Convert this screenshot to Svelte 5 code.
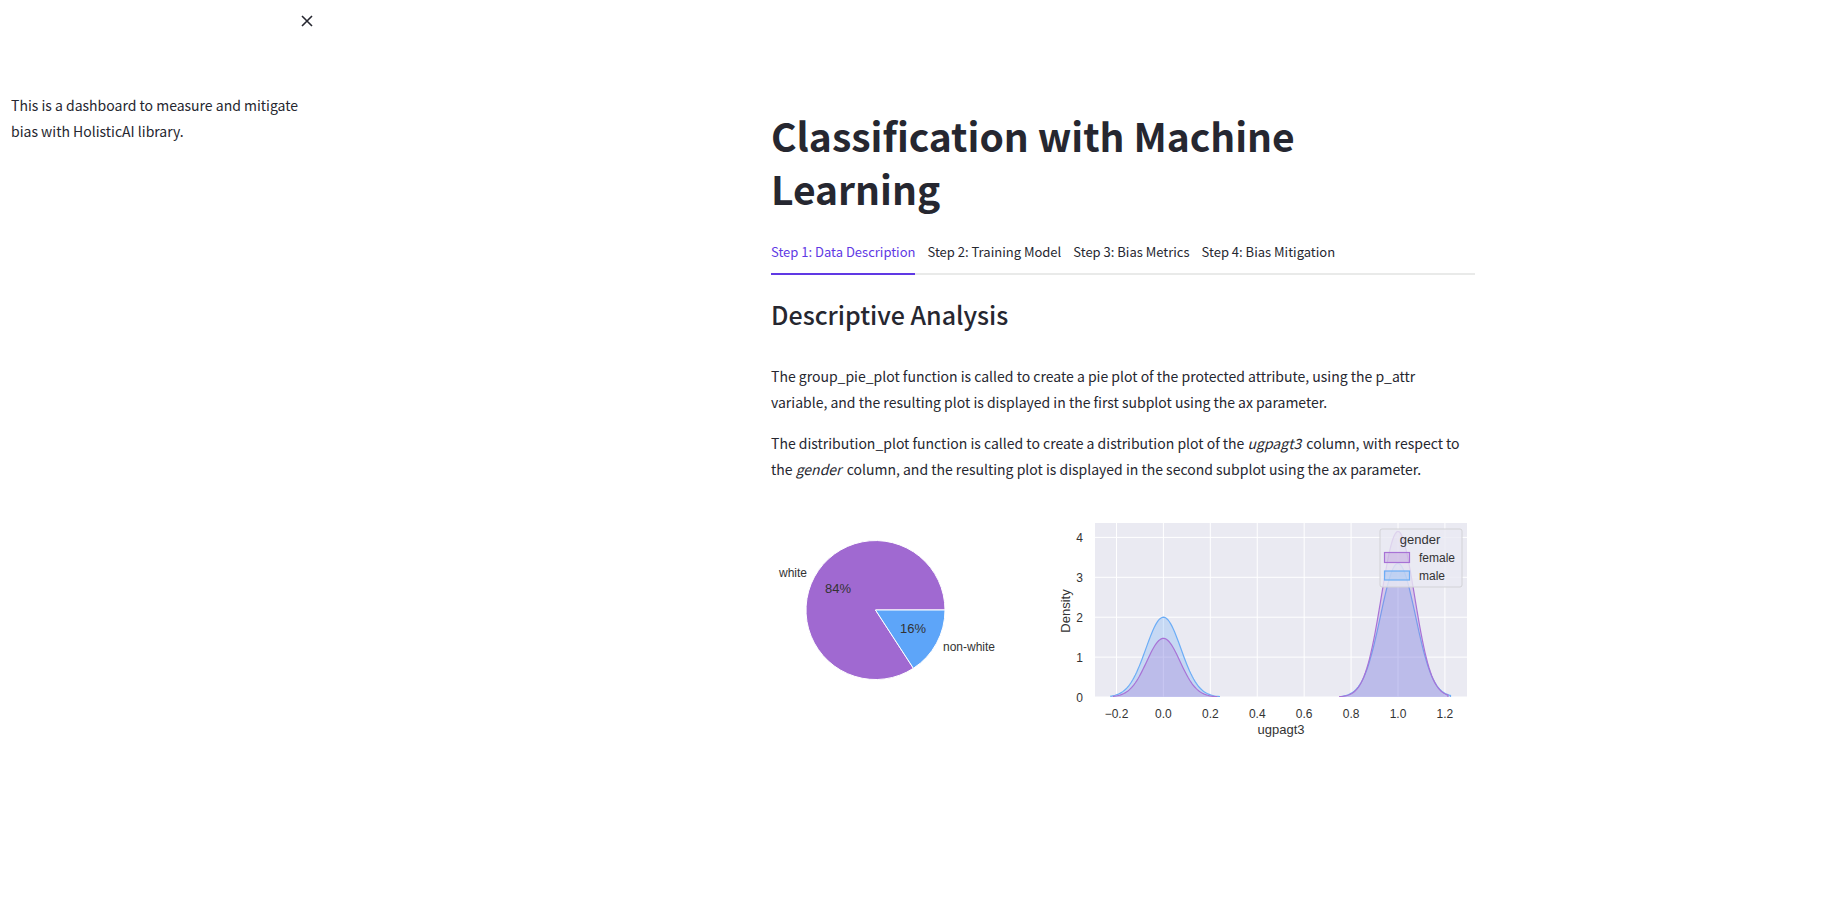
<script>
  const tabs = [
    'Step 1: Data Description',
    'Step 2: Training Model',
    'Step 3: Bias Metrics',
    'Step 4: Bias Mitigation'
  ];
  let active = $state(0);
  let open = $state(true);

  // Density plot scales
  const plot = { left: 324, right: 696, top: 25, bottom: 199 };
  const sx = (v) => 392.4 + v * 234.6;
  const sy = (v) => plot.bottom - v * 39.9;

  const xTicks = [-0.2, 0, 0.2, 0.4, 0.6, 0.8, 1, 1.2];
  const yTicks = [0, 1, 2, 3, 4];
  const label = (v) => v.toFixed(1).replace('-', '\u2212');

  // Gaussian bump sampled between two distances from its mean
  function bump(mean, peak, sd, from, to) {
    let d = `M${sx(mean + from * sd).toFixed(2)} ${plot.bottom}`;
    for (let i = 0; i <= 80; i++) {
      const z = from + ((to - from) * i) / 80;
      d += `L${sx(mean + z * sd).toFixed(2)} ${sy(peak * Math.exp((-z * z) / 2)).toFixed(2)}`;
    }
    return `${d}V${plot.bottom}`;
  }

  const curves = [
    { kind: 'male', d: bump(0, 2, 0.0746, -3, 3.2) },
    { kind: 'male', d: bump(1, 3.35, 0.0746, -3.2, 3) },
    { kind: 'female', d: bump(0, 1.47, 0.071, -3, 3.2) },
    { kind: 'female', d: bump(1, 4.15, 0.071, -3.5, 3) }
  ];
</script>

<div class="app">
  {#if open}
    <aside>
      <header>
        <button class="close" aria-label="Close sidebar" onclick={() => (open = false)}>
          <svg viewBox="0 0 12 12" width="12" height="12" aria-hidden="true">
            <path d="M1 1L11 11M11 1L1 11" />
          </svg>
        </button>
      </header>
      <p>This is a dashboard to measure and mitigate bias with HolisticAI library.</p>
    </aside>
  {/if}

  <main>
    <div class="block">
      <h1>Classification with Machine<br />Learning</h1>

      <div class="tabs" role="tablist">
        {#each tabs as tab, i}
          <button
            role="tab"
            aria-selected={active === i}
            class:active={active === i}
            onclick={() => (active = i)}>{tab}</button>
        {/each}
      </div>

      <h2>Descriptive Analysis</h2>
      <p>
        The group_pie_plot function is called to create a pie plot of the protected attribute, using the p_attr<br />
        variable, and the resulting plot is displayed in the first subplot using the ax parameter.
      </p>
      <p>
        The distribution_plot function is called to create a distribution plot of the <em>ugpagt3</em> column, with
        respect to the <em>gender</em> column, and the resulting plot is displayed in the second subplot using the ax
        parameter.
      </p>

      <svg class="figure" viewBox="0 0 704 250" role="img" aria-label="Pie and density plots">
        <defs>
          <clipPath id="axes">
            <rect x={plot.left} y={plot.top} width={plot.right - plot.left} height={plot.bottom - plot.top} />
          </clipPath>
        </defs>

        <g class="pie">
          <path fill="#a069d1" d="M104.5 112L174 112A69.5 69.5 0 1 0 142.4 170.3Z" />
          <path fill="#5da5f9" d="M104.5 112L142.4 170.3A69.5 69.5 0 0 0 174 112Z" />
          <text class="large" x="67" y="95" text-anchor="middle">84%</text>
          <text class="large" x="142" y="135" text-anchor="middle">16%</text>
          <text x="36" y="79" text-anchor="end">white</text>
          <text x="172" y="153">non-white</text>
        </g>

        <g class="density">
          <rect
            x={plot.left}
            y={plot.top}
            width={plot.right - plot.left}
            height={plot.bottom - plot.top}
            fill="#eaeaf2" />
          <g clip-path="url(#axes)">
            {#each xTicks as t}
              <line class="grid" x1={sx(t)} x2={sx(t)} y1={plot.top} y2={plot.bottom} />
            {/each}
            {#each yTicks as t}
              <line class="grid" x1={plot.left} x2={plot.right} y1={sy(t)} y2={sy(t)} />
            {/each}
            {#each curves as c}
              <path class={c.kind} d={c.d} />
            {/each}
          </g>
          {#each xTicks as t}
            <text x={sx(t)} y="220" text-anchor="middle">{label(t)}</text>
          {/each}
          {#each yTicks as t}
            <text x="312" y={sy(t) + 5} text-anchor="end">{t}</text>
          {/each}
          <text class="large" x="510" y="236" text-anchor="middle">ugpagt3</text>
          <text class="large" transform="translate(299 113) rotate(-90)" text-anchor="middle">Density</text>

          <rect class="legend" x="609" y="31" width="82" height="58" rx="2" />
          <text class="large" x="649" y="46" text-anchor="middle">gender</text>
          <rect class="female" x="613.5" y="54.5" width="25" height="10" />
          <rect class="male" x="613.5" y="73" width="25" height="9" />
          <text x="648" y="64">female</text>
          <text x="648" y="82">male</text>
        </g>
      </svg>
    </div>
  </main>
</div>

<style>
  :global(body) {
    margin: 0;
    background: #fff;
  }

  .app {
    display: flex;
    min-height: 100vh;
    color: #262730;
    font-family: 'Noto Sans CJK SC', 'Open Sans', sans-serif;
    font-size: 14px;
    line-height: 26px;
  }

  aside {
    flex: 0 0 312px;
    box-sizing: border-box;
    margin-right: 111px;
    padding-left: 11px;
  }

  aside header {
    display: flex;
    justify-content: flex-end;
    padding-top: 11px;
    margin-bottom: 61px;
  }

  .close {
    display: flex;
    width: 10px;
    height: 20px;
    padding: 0;
    align-items: center;
    justify-content: center;
    border: 0;
    background: none;
    cursor: pointer;
  }

  .close svg {
    flex: none;
    fill: none;
    stroke: #262730;
    stroke-width: 1.6;
  }

  main {
    flex: 1;
    min-width: 0;
  }

  .block {
    box-sizing: border-box;
    max-width: 736px;
    margin: 0 auto;
    padding: 109px 16px 16px;
  }

  h1 {
    margin: 0;
    font-size: 39px;
    font-weight: 700;
    line-height: 53px;
  }

  .tabs {
    display: flex;
    gap: 12px;
    margin: 17px 0 22px;
    box-shadow: inset 0 -2px #e9eae9;
  }

  .tabs button {
    height: 43px;
    padding: 0 0 4px;
    border: 0;
    background: none;
    color: inherit;
    font: inherit;
    font-size: 13px;
    cursor: pointer;
  }

  .tabs button.active {
    color: #6039e4;
    box-shadow: inset 0 -2px #6039e4;
  }

  h2 {
    margin: 0 0 32px;
    font-size: 25px;
    font-weight: 500;
    line-height: 34px;
  }

  p {
    margin: 0;
  }

  em {
    margin-right: 2px;
  }

  .block p {
    margin-bottom: 15px;
  }

  .figure {
    display: block;
    width: 100%;
    height: auto;
    margin-top: 16px;
  }

  .figure text {
    fill: #333;
    font-family: 'Liberation Sans', Arial, sans-serif;
    font-size: 12px;
  }

  .figure .large {
    font-size: 13px;
  }

  .pie path {
    stroke: #fff;
    stroke-width: 1;
    stroke-linejoin: round;
  }

  .grid {
    stroke: #fff;
    stroke-width: 1;
  }

  .female {
    fill: rgba(160, 105, 209, 0.25);
    stroke: #a872d6;
    stroke-width: 1.2;
  }

  .male {
    fill: rgba(93, 165, 249, 0.25);
    stroke: #6cadf6;
    stroke-width: 1.2;
  }

  .legend {
    fill: rgba(234, 234, 242, 0.8);
    stroke: #d2d2d6;
    stroke-width: 1;
  }
</style>
